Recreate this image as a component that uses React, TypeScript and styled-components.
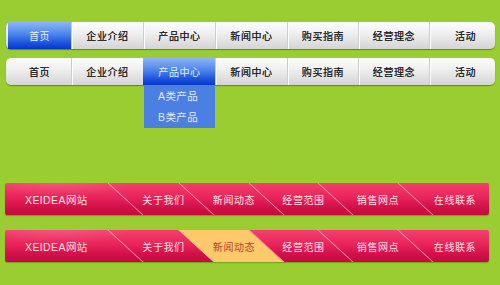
import React from "react";
import styled, { createGlobalStyle, css } from "styled-components";

const Global = createGlobalStyle`
  html, body { margin: 0; padding: 0; background: #9acd32; }
  body { font-family: "Liberation Sans", "Noto Sans CJK SC", sans-serif; }
`;

const Page = styled.div`
  width: 500px;
  height: 285px;
  padding: 22px 0 0 6px;
  box-sizing: border-box;
  display: flex;
  flex-direction: column;
  overflow: hidden;
`;

const GrayBar = styled.div<{ $mt?: number }>`
  display: flex;
  width: 489px;
  height: 27px;
  margin-top: ${(p) => p.$mt ?? 0}px;
  box-sizing: border-box;
  padding-left: 2px;
  border-radius: 5px;
  background: linear-gradient(#fdfdfd, #f0f0f0 40%, #d4d4d4);
  box-shadow: 0 1px 1px rgba(60, 90, 10, 0.6);
  position: relative;
`;

const GrayItem = styled.div<{ $w: number; $active?: boolean; $first?: boolean }>`
  position: relative;
  width: ${(p) => p.$w}px;
  flex: none;
  display: flex;
  align-items: center;
  justify-content: center;
  font-size: 10px;
  letter-spacing: 0.6px;
  color: #262626;
  text-shadow: 0 0 0.4px #333;
  ${(p) =>
    !p.$first &&
    css`
      border-left: 1px solid #cdcdcd;
      box-shadow: inset 1px 0 0 #fdfdfd;
    `}
  ${(p) =>
    p.$active &&
    css`
      background: linear-gradient(#8db6f7, #4c86ec 45%, #1a4fdc 80%, #0836cc);
      color: #e8efff;
      text-shadow: none;
      border-left-color: transparent;
      box-shadow: none;
    `}
`;

const Dropdown = styled.div`
  position: absolute;
  left: 0;
  top: 100%;
  width: 100%;
  padding-top: 1px;
  background: #4b7fe2;
  display: flex;
  flex-direction: column;
  z-index: 2;
`;

const DropItem = styled.div`
  height: 21px;
  line-height: 21px;
  padding-left: 14px;
  font-size: 10.5px;
  letter-spacing: 0.4px;
  color: #e4ecff;
`;

const RedBar = styled.div<{ $mt: number }>`
  display: flex;
  width: 484px;
  height: 32px;
  margin-left: -1px;
  margin-top: ${(p) => p.$mt}px;
  border-radius: 2px;
  overflow: hidden;
  background: radial-gradient(ellipse 75px 14px at 55px 0, rgba(255, 255, 255, 0.12), rgba(255, 255, 255, 0) 100%),
    linear-gradient(#f4406e, #e8245a 45%, #d4104a 75%, #c40a3e);
  box-shadow: 0 1px 1px rgba(60, 90, 10, 0.4);
`;

const Logo = styled.div`
  width: 120px;
  flex: none;
  display: flex;
  align-items: center;
  padding-left: 20px;
  box-sizing: border-box;
  font-size: 10.5px;
  letter-spacing: 0.4px;
  color: #ffe3ea;
`;

const RedItem = styled.div<{ $w: number; $active?: boolean }>`
  position: relative;
  width: ${(p) => p.$w}px;
  flex: none;
  display: flex;
  align-items: center;
  justify-content: center;
  padding-left: 6px;
  box-sizing: border-box;
  font-size: 10px;
  letter-spacing: 0.6px;
  color: ${(p) => (p.$active ? "#b5432f" : "#ffe3ea")};
  &::before {
    content: "";
    position: absolute;
    left: 0;
    top: 0;
    bottom: 0;
    width: 1px;
    background: rgba(255, 200, 215, 0.85);
    transform: skewX(47.6deg);
    z-index: 1;
  }
  ${(p) =>
    p.$active &&
    css`
      &::after {
        content: "";
        position: absolute;
        left: 0;
        right: 0;
        top: 0;
        bottom: 0;
        background: #fdc96a;
        transform: skewX(47.6deg);
        z-index: 2;
      }
    `}
`;

const Label = styled.span`
  position: relative;
  z-index: 3;
`;

const grayItems = [
  { t: "首页", w: 63 },
  { t: "企业介绍", w: 71 },
  { t: "产品中心", w: 71 },
  { t: "新闻中心", w: 71 },
  { t: "购买指南", w: 70 },
  { t: "经营理念", w: 70 },
  { t: "活动", w: 71 },
];

const redItems = [
  { t: "关于我们", w: 71 },
  { t: "新闻动态", w: 70 },
  { t: "经营范围", w: 69 },
  { t: "销售网点", w: 80 },
  { t: "在线联系", w: 74 },
];

export default function App() {
  return (
    <>
      <Global />
      <Page>
        <GrayBar>
          {grayItems.map((it, i) => (
            <GrayItem key={it.t} $w={it.w} $first={i === 0} $active={i === 0}>
              {it.t}
            </GrayItem>
          ))}
        </GrayBar>
        <GrayBar $mt={9}>
          {grayItems.map((it, i) => (
            <GrayItem key={it.t} $w={it.w} $first={i === 0} $active={i === 2}>
              {it.t}
              {i === 2 && (
                <Dropdown>
                  <DropItem>A类产品</DropItem>
                  <DropItem>B类产品</DropItem>
                </Dropdown>
              )}
            </GrayItem>
          ))}
        </GrayBar>
        <RedBar $mt={98}>
          <Logo>XEIDEA网站</Logo>
          {redItems.map((it) => (
            <RedItem key={it.t} $w={it.w}>
              <Label>{it.t}</Label>
            </RedItem>
          ))}
        </RedBar>
        <RedBar $mt={15}>
          <Logo>XEIDEA网站</Logo>
          {redItems.map((it, i) => (
            <RedItem key={it.t} $w={it.w} $active={i === 1}>
              <Label>{it.t}</Label>
            </RedItem>
          ))}
        </RedBar>
      </Page>
    </>
  );
}
